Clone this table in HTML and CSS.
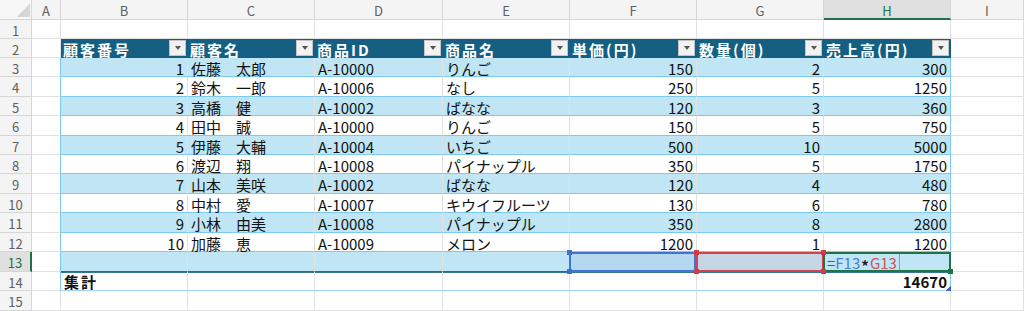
FILE: index.html
```html
<!DOCTYPE html>
<html lang="ja">
<head>
<meta charset="utf-8">
<title>売上表</title>
<link rel="stylesheet" href="styles.css">
</head>
<body>
<div class="sheet">
<div class="hd corner"><i class="tri"></i></div><div class="hd">A</div><div class="hd">B</div><div class="hd">C</div><div class="hd">D</div><div class="hd">E</div><div class="hd">F</div><div class="hd">G</div><div class="hd hsel">H</div><div class="hd">I</div>

<div class="hd rh">1</div><div></div><div></div><div></div><div></div><div></div><div></div><div></div><div></div><div></div>

<div class="hd rh">2</div><div></div><div class="th">顧客番号<i class="dd"></i></div><div class="th">顧客名<i class="dd"></i></div><div class="th">商品ID<i class="dd"></i></div><div class="th">商品名<i class="dd"></i></div><div class="th">単価(円)<i class="dd"></i></div><div class="th">数量(個)<i class="dd"></i></div><div class="th">売上高(円)<i class="dd"></i></div><div></div>

<div class="hd rh">3</div><div class="ta"></div><div class="bl r">1</div><div class="bl">佐藤　太郎</div><div class="bl">A-10000</div><div class="bl">りんご</div><div class="bl r">150</div><div class="bl r">2</div><div class="bl r te">300</div><div></div>
<div class="hd rh">4</div><div class="ta"></div><div class="wb r">2</div><div class="wb">鈴木　一郎</div><div class="wb">A-10006</div><div class="wb">なし</div><div class="wb r">250</div><div class="wb r">5</div><div class="wb r te">1250</div><div></div>
<div class="hd rh">5</div><div class="ta"></div><div class="bl r">3</div><div class="bl">高橋　健</div><div class="bl">A-10002</div><div class="bl">ばなな</div><div class="bl r">120</div><div class="bl r">3</div><div class="bl r te">360</div><div></div>
<div class="hd rh">6</div><div class="ta"></div><div class="wb r">4</div><div class="wb">田中　誠</div><div class="wb">A-10000</div><div class="wb">りんご</div><div class="wb r">150</div><div class="wb r">5</div><div class="wb r te">750</div><div></div>
<div class="hd rh">7</div><div class="ta"></div><div class="bl r">5</div><div class="bl">伊藤　大輔</div><div class="bl">A-10004</div><div class="bl">いちご</div><div class="bl r">500</div><div class="bl r">10</div><div class="bl r te">5000</div><div></div>
<div class="hd rh">8</div><div class="ta"></div><div class="wb r">6</div><div class="wb">渡辺　翔</div><div class="wb">A-10008</div><div class="wb">パイナップル</div><div class="wb r">350</div><div class="wb r">5</div><div class="wb r te">1750</div><div></div>
<div class="hd rh">9</div><div class="ta"></div><div class="bl r">7</div><div class="bl">山本　美咲</div><div class="bl">A-10002</div><div class="bl">ばなな</div><div class="bl r">120</div><div class="bl r">4</div><div class="bl r te">480</div><div></div>
<div class="hd rh">10</div><div class="ta"></div><div class="wb r">8</div><div class="wb">中村　愛</div><div class="wb">A-10007</div><div class="wb">キウイフルーツ</div><div class="wb r">130</div><div class="wb r">6</div><div class="wb r te">780</div><div></div>
<div class="hd rh">11</div><div class="ta"></div><div class="bl r">9</div><div class="bl">小林　由美</div><div class="bl">A-10008</div><div class="bl">パイナップル</div><div class="bl r">350</div><div class="bl r">8</div><div class="bl r te">2800</div><div></div>
<div class="hd rh">12</div><div class="ta"></div><div class="wb r">10</div><div class="wb">加藤　恵</div><div class="wb">A-10009</div><div class="wb">メロン</div><div class="wb r">1200</div><div class="wb r">1</div><div class="wb r te">1200</div><div></div>

<div class="hd rh rsel">13</div><div class="ta"></div><div class="bl last"></div><div class="bl last"></div><div class="bl last"></div><div class="bl last"></div>
<div class="bl last fsel"><i class="box blue"></i><b class="k k1 kb"></b><b class="k k2 kb"></b><b class="k k3 kb"></b><b class="k k4 kb"></b></div>
<div class="bl last gsel"><i class="box red"></i><b class="k k1 kr"></b><b class="k k2 kr"></b><b class="k k3 kr"></b><b class="k k4 kr"></b></div>
<div class="bl last te hsel13"><span class="eq">=</span><span class="fb">F13</span><span class="op">*</span><span class="fr">G13</span><span class="caret"></span><i class="box green"></i><b class="fill"></b></div><div></div>

<div class="hd rh">14</div><div class="ta"></div><div class="tot lbl">集計</div><div class="tot"></div><div class="tot"></div><div class="tot"></div><div class="tot"></div><div class="tot"></div><div class="tot r te endc">14670<b class="rs"></b></div><div></div>

<div class="hd rh">15</div><div></div><div></div><div></div><div></div><div></div><div></div><div></div><div></div><div></div>
</div>
</body>
</html>
```
FILE: styles.css
```css
* { box-sizing: border-box; }
html, body { margin: 0; padding: 0; background: #fff; }
body {
  font-family: "Noto Sans CJK JP", "Noto Sans", sans-serif;
  font-size: 15px;
  color: #111;
  overflow: hidden;
}
.sheet {
  display: grid;
  width: 1024px;
  height: 311px;
  grid-template-columns: 32px 29px 127px 127px 128px 127px 127px 127px 127px 1fr;
  grid-template-rows: 20px 19px 19px 19px 20px 19px 20px 19px 19px 20px 19px 20px 19px 20px 19px 20px;
}
.sheet > div {
  border-right: 1px solid #e1e1e1;
  border-bottom: 1px solid #e1e1e1;
  padding: 2px 3px 0 3px;
  line-height: 17px;
  white-space: nowrap;
  min-width: 0;
}
.sheet > .hd {
  background: #f4f4f4;
  color: #5f5f5f;
  font-size: 13px;
  text-align: center;
  border-color: #d6d6d6;
  padding: 2px 0 0 0;
}
.sheet > .corner {
  display: flex;
  align-items: flex-end;
  justify-content: flex-end;
  padding: 0 1px 2px 0;
  background: #f7f7f7;
}
.tri {
  display: block;
  width: 14px;
  height: 14px;
  background: linear-gradient(135deg, transparent 50%, #d6d6d6 50%);
}
.sheet > .hsel {
  background: #e0e0e0;
  color: #1e7145;
  border-bottom: 2px solid #1e7145;
}
.sheet > .rsel {
  background: #e0e0e0;
  color: #1e7145;
  border-right: 2px solid #1e7145;
}

/* table header */
.sheet > .th {
  background: #156082;
  color: #fff;
  font-weight: bold;
  letter-spacing: 2px;
  display: flex;
  align-items: flex-start;
  padding: 2px 1px 0 2px;
  border-right-color: #156082;
  border-bottom-color: #156082;
}
.dd {
  margin-left: auto;
  margin-top: -1px;
  width: 17px;
  height: 16px;
  background: #f2f2f2;
  border: 1px solid #c4c4c4;
  display: flex;
  align-items: center;
  justify-content: center;
  flex: none;
}
.dd::after {
  content: "";
  border-left: 3.5px solid transparent;
  border-right: 3.5px solid transparent;
  border-top: 4px solid #555;
}

/* table body */
.sheet > .bl { background: #c0e6f5; border-bottom-color: #7ccaee; }
.sheet > .wb { background: #fff; border-bottom-color: #7ccaee; }
.sheet > .ta { border-right-color: #7ccaee; }
.sheet > .te { border-right-color: #7ccaee; }
.sheet > .r { text-align: right; padding-right: 3px; }
.sheet > .last { border-bottom-color: #2c6b8b; }

/* total row */
.sheet > .tot {
  background: #fff;
  font-weight: bold;
  box-shadow: inset 0 1px 0 #3a7695;
  border-bottom-color: #a2d6f0;
  padding-top: 1px;
}
.sheet > .lbl { letter-spacing: 2px; }
.endc { position: relative; }
.rs {
  position: absolute;
  right: -1px;
  bottom: -1px;
  width: 5px;
  height: 5px;
  background: linear-gradient(135deg, transparent 45%, #3f63c8 45%);
  z-index: 3;
}

/* selections */
.fsel, .gsel, .hsel13 { position: relative; }
.sheet > .fsel { background: #b3d8ef; }
.sheet > .gsel { background: #c4d6e3; }
.box {
  position: absolute;
  z-index: 2;
  border: 2px solid;
}
.fsel .box { left: -1px; top: 0; right: 0; bottom: -1px; }
.gsel .box { left: -1px; top: 0; right: -1px; bottom: -1px; }
.hsel13 .box { left: -1px; top: 0; right: -1px; bottom: -1px; }
.blue { border-color: #4273d3; }
.red { border-color: #d0434d; }
.green { border-color: #217346; }
.k {
  position: absolute;
  width: 5px;
  height: 5px;
  z-index: 3;
}
.k1 { left: -3px; top: -2px; }
.k2 { right: -3px; top: -2px; }
.k3 { left: -3px; bottom: -3px; }
.k4 { right: -3px; bottom: -3px; }
.kb { background: #3c6fd0; }
.kr { background: #d23a45; }
.fill {
  position: absolute;
  right: -3px;
  bottom: -3px;
  width: 5px;
  height: 5px;
  background: #217346;
  z-index: 3;
}
.eq { color: #4b5b66; }
.fb { color: #4a80d9; }
.op {
  color: #222;
  font-weight: bold;
  display: inline-block;
  vertical-align: -3px;
  margin: 0 1px;
}
.fr { color: #d2515c; }
.caret {
  display: inline-block;
  width: 1px;
  height: 17px;
  background: #9a9a9a;
  vertical-align: top;
  margin-left: 2px;
}
```
